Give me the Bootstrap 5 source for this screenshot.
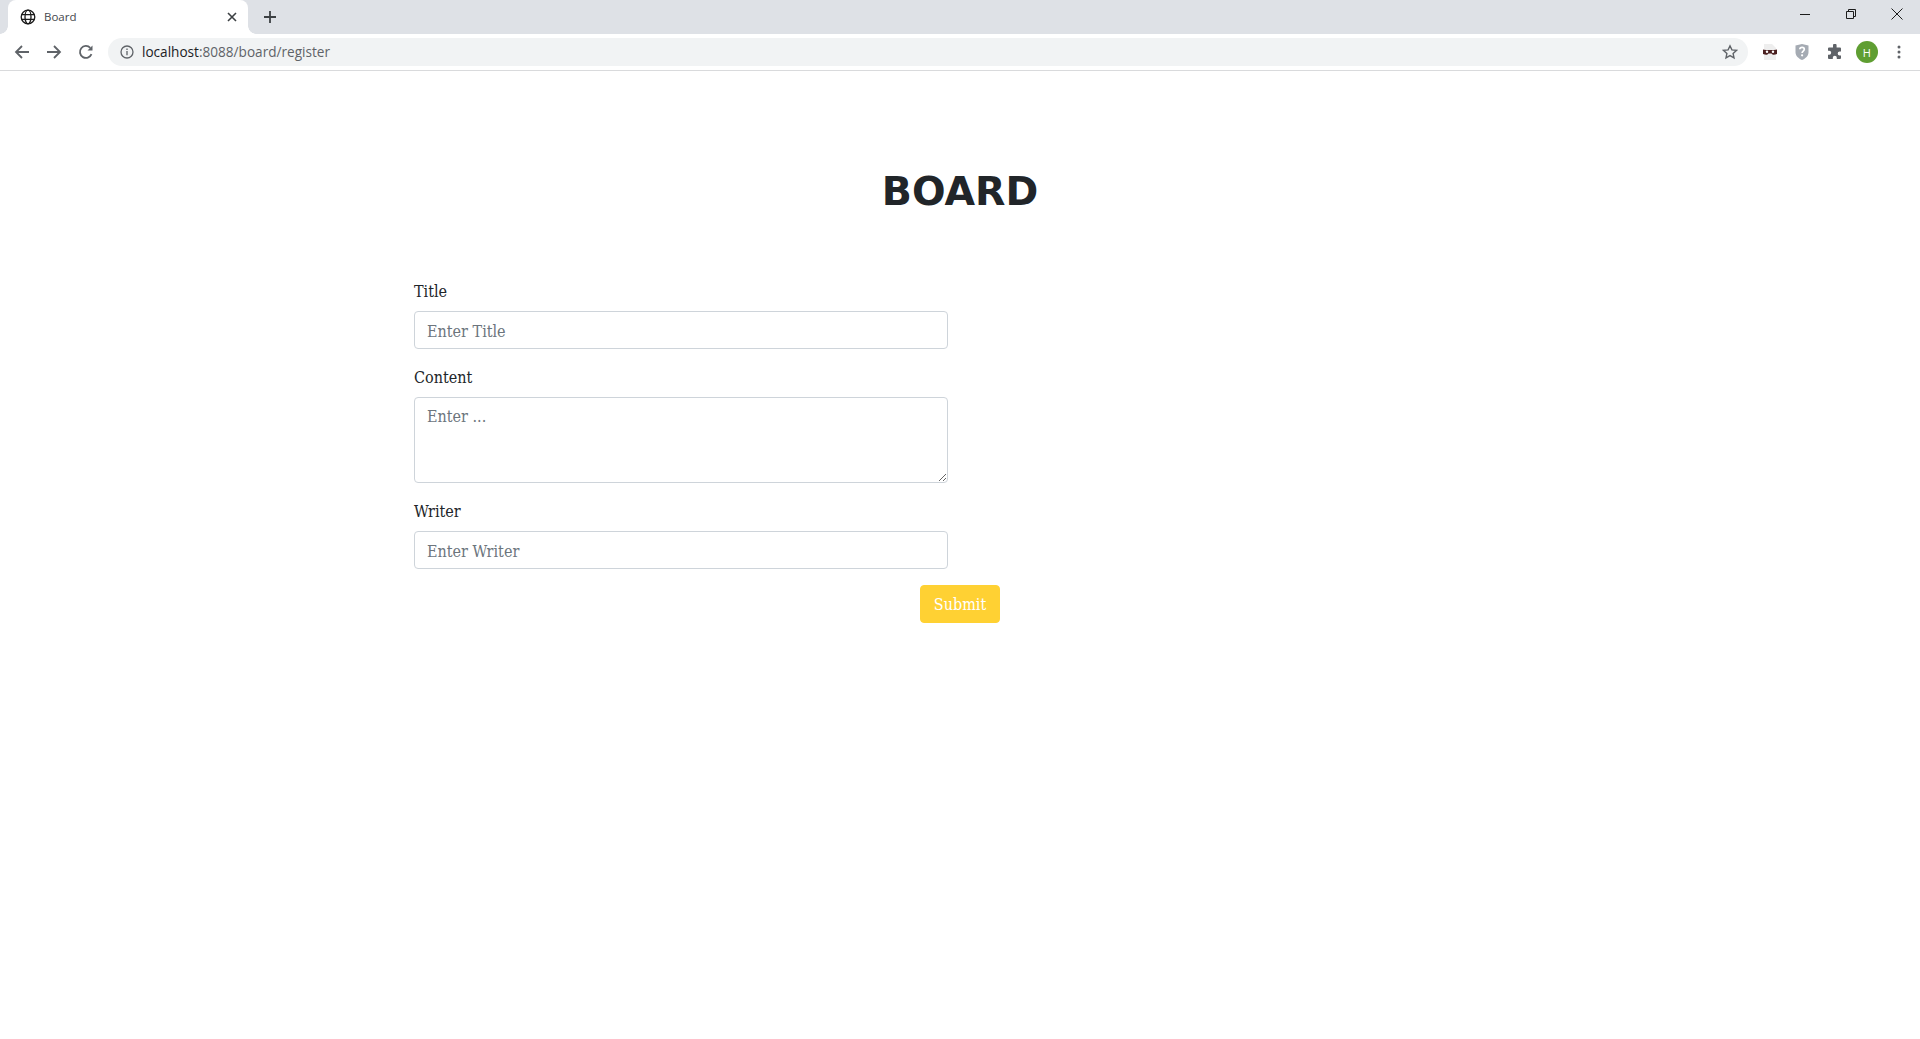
<!doctype html>
<html lang="en"><head><meta charset="utf-8"><title>Board</title>
<link href="https://cdn.jsdelivr.net/npm/bootstrap@5.3.0/dist/css/bootstrap.min.css" rel="stylesheet">
<style>
html,body{height:100%;background:#fff;overflow:hidden}
body{font-family:"DejaVu Serif Condensed","DejaVu Serif",serif}
.tabstrip{height:34px;background:#dee1e6;padding-left:8px}
.browser-tab{width:240px;height:34px;background:#fff;border-radius:8px 8px 0 0;padding:0 8px 0 12px;font:11.500px "Open Sans",sans-serif;color:#45484d;position:relative}
.browser-tab::before,.browser-tab::after{content:"";position:absolute;bottom:0;width:8px;height:8px;background:radial-gradient(circle at 0 0,transparent 7.5px,#fff 8px)}
.browser-tab::before{left:-8px}
.browser-tab::after{right:-8px;background:radial-gradient(circle at 100% 0,transparent 7.5px,#fff 8px)}
.tab-title{margin-left:8px;padding-bottom:2px}
.tab-close{margin-left:auto}
.newtab{margin-left:15px}
.winctl{width:46px;height:28px}
.winctl-wrap{margin-left:auto}
.toolbar{height:37px;background:#fff;border-bottom:1px solid #d9dadc;padding:2px 0 2px 8px}
.nav-ico{width:28px;height:28px;margin-right:4px}
.omnibox{width:1640px;height:28px;margin:0 3px 0 4px;border-radius:14px;background:#f1f3f4;font:13.6px "Open Sans",sans-serif;color:#5f6368;padding:0 10px 0 12px}
.host{color:#202124}
.omni-url{margin-left:8px;padding-bottom:2px}
.star{margin-left:auto}
.ext{width:26px;height:28px;margin-left:6.200px}
.avatar{width:22px;height:22px;border-radius:50%;background:#5f9e32;color:#fff;font:11px "Open Sans",sans-serif}
.page-title{font-family:"DejaVu Sans",sans-serif;font-weight:700;font-size:39.500px;line-height:48px;color:#212529;padding-top:96px;margin-bottom:64px}
.board-form{width:534px;margin-left:414px}
.board-form label{font-size:16px;line-height:24px;color:#212529;padding-top:1px;margin-bottom:7px;display:block}
.board-form .form-control{font-size:16px;line-height:24px;height:38px;padding:7px 12px 5px;border-color:#ced4da;border-radius:4px;font-family:inherit}
.board-form textarea.form-control{height:86px;padding-top:7px}
.form-control::placeholder{color:#6c757d}
.field{margin-bottom:16px}
.submit-btn{background:#ffd133;border:1px solid #ffd133;color:#fff;font-size:16px;line-height:24px;padding:7px 0 5px;border-radius:4px;width:80px}
</style></head><body>
<div class="tabstrip d-flex align-items-start">
  <div class="browser-tab d-flex align-items-center">
    <svg width="16" height="16" viewBox="0 0 16 16" fill="none" stroke="#1b1b1b" stroke-width="1.3"><circle cx="8" cy="8" r="6.8"/><ellipse cx="8" cy="8" rx="3" ry="6.8"/><path d="M1.5 5.6h13M1.5 10.4h13"/></svg>
    <span class="tab-title">Board</span>
    <svg class="tab-close" width="16" height="16" viewBox="0 0 16 16" stroke="#3c4043" stroke-width="1.6"><path d="M4 4l8 8M12 4l-8 8"/></svg>
  </div>
  <svg class="newtab align-self-center" width="14" height="14" viewBox="0 0 14 14" stroke="#3c4043" stroke-width="1.8"><path d="M7 1v12M1 7h12"/></svg>
  <div class="winctl-wrap d-flex">
    <div class="winctl d-flex align-items-center justify-content-center"><svg width="10" height="10" viewBox="0 0 10 10" stroke="#1c1c1c"><path d="M0 5.5h10"/></svg></div>
    <div class="winctl d-flex align-items-center justify-content-center"><svg width="10" height="10" viewBox="0 0 10 10" fill="none" stroke="#1c1c1c"><path d="M.5 2.5h7v7h-7zM2.5 2.5V.5h7v7h-2"/></svg></div>
    <div class="winctl d-flex align-items-center justify-content-center"><svg width="12" height="12" viewBox="0 0 12 12" stroke="#1c1c1c"><path d="M.5.5l11 11M11.500.5l-11 11"/></svg></div>
  </div>
</div>
<div class="toolbar d-flex align-items-center">
  <div class="nav-ico d-flex align-items-center justify-content-center"><svg width="16" height="16" viewBox="0 0 16 16" fill="none" stroke="#5f6368" stroke-width="1.8"><path d="M15 8H2M8 2L2 8l6 6"/></svg></div>
  <div class="nav-ico d-flex align-items-center justify-content-center"><svg width="16" height="16" viewBox="0 0 16 16" fill="none" stroke="#5f6368" stroke-width="1.8"><path d="M1 8h13M8 2l6 6-6 6"/></svg></div>
  <div class="nav-ico d-flex align-items-center justify-content-center"><svg width="16" height="16" viewBox="0 0 16 16" fill="none" stroke="#5f6368" stroke-width="1.8"><path d="M13.500 10.200A6 6 0 1 1 12.300 3.800"/><path d="M14.500 1.500v5h-5z" fill="#5f6368" stroke="none"/></svg></div>
  <div class="omnibox d-flex align-items-center">
    <svg width="14" height="14" viewBox="0 0 14 14" fill="none" stroke="#5f6368" stroke-width="1.3"><circle cx="7" cy="7" r="6"/><path d="M7 6v4.200M7 3.600v1.300"/></svg>
    <span class="omni-url"><span class="host">localhost</span>:8088/board/register</span>
    <svg class="star" width="16" height="16" viewBox="0 0 16 16" fill="none" stroke="#5f6368" stroke-width="1.400"><path d="M8 1.800l1.900 4.100 4.500.5-3.300 3 .9 4.400L8 11.600l-4 2.200.9-4.400-3.300-3 4.500-.5z"/></svg>
  </div>
  <div class="ext d-flex align-items-center justify-content-center"><svg width="16" height="18" viewBox="0 0 16 18"><path d="M2 1h8l4 4v12H2z" fill="#eeeeee"/><path d="M1 6.500c3 .8 11 .8 14 0v4.500c-3 1-4.500.8-5.500-.6H6.500c-1 1.400-2.500 1.600-5.500.6z" fill="#4a1f1f"/><circle cx="5" cy="8.800" r="1.200" fill="#fff"/><circle cx="11" cy="8.800" r="1.200" fill="#fff"/></svg></div>
  <div class="ext d-flex align-items-center justify-content-center"><svg width="16" height="18" viewBox="0 0 16 18"><path d="M1.500 2.500L8 1l6.500 1.500V9c0 4-3 6.500-6.500 8-3.500-1.500-6.500-4-6.500-8z" fill="#a5abb3"/><path d="M5.800 6.200C6 3.800 10.300 3.800 10.300 6.300c0 1.800-2.200 1.800-2.200 3.700" fill="none" stroke="#fff" stroke-width="1.700"/><circle cx="8.100" cy="12.300" r="1.100" fill="#fff"/></svg></div>
  <div class="ext d-flex align-items-center justify-content-center"><svg width="16" height="16" viewBox="0 0 16 16"><path d="M6 1.500a1.800 1.800 0 0 1 3.600 0V3.500h3.400a1 1 0 0 1 1 1V7.500h-1.300a2 2 0 0 0 0 4H14v2.500a1 1 0 0 1-1 1H9.800v-1.300a2 2 0 0 0-4 0V15H2a1 1 0 0 1-1-1V10.800h1.200a2 2 0 0 0 0-4H1V4.500a1 1 0 0 1 1-1h4z" fill="#5f6368"/></svg></div>
  <div class="ext d-flex align-items-center justify-content-center"><div class="avatar d-flex align-items-center justify-content-center">H</div></div>
  <div class="ext d-flex align-items-center justify-content-center"><svg width="4" height="14" viewBox="0 0 4 14" fill="#5f6368"><circle cx="2" cy="2" r="1.500"/><circle cx="2" cy="7" r="1.500"/><circle cx="2" cy="12" r="1.500"/></svg></div>
</div>
<h1 class="page-title text-center">BOARD</h1>
<form class="board-form">
  <div class="field"><label for="t">Title</label><input id="t" class="form-control" placeholder="Enter Title"></div>
  <div class="field"><label for="c">Content</label><textarea id="c" class="form-control d-block" placeholder="Enter ..."></textarea></div>
  <div class="field"><label for="w">Writer</label><input id="w" class="form-control" placeholder="Enter Writer"></div>
</form>
<div class="text-center"><button type="button" class="btn submit-btn">Submit</button></div>
</body></html>
